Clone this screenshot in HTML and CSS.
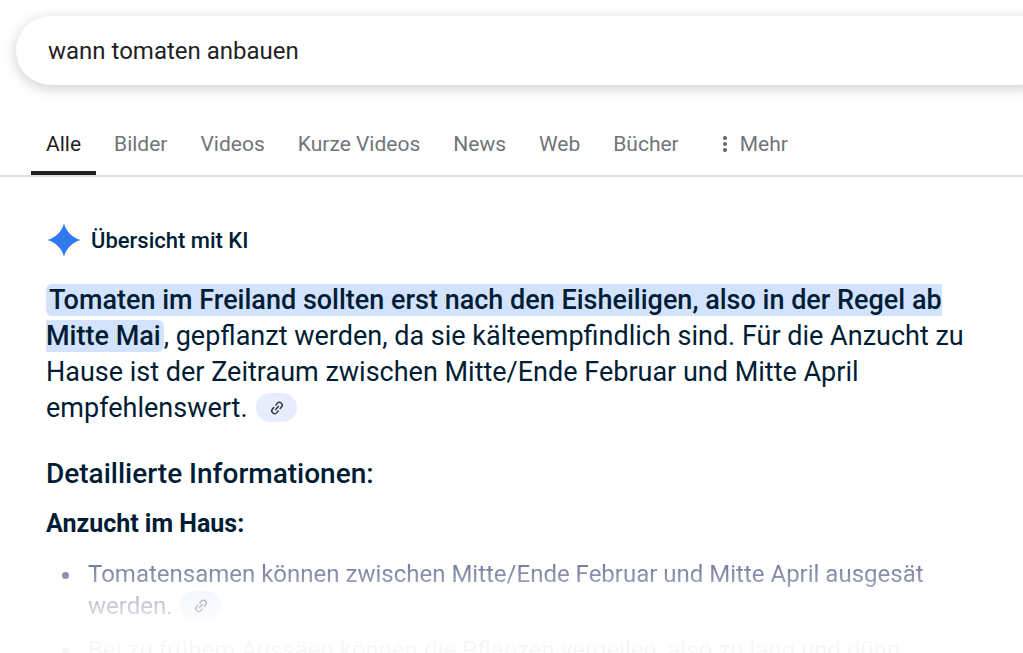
FILE: index.html
```html
<!DOCTYPE html>
<html lang="de">
  <head>
    <meta charset="UTF-8" />
    <meta name="viewport" content="width=device-width, initial-scale=1.0" />

    <title>wann tomaten anbauen</title>

    <link rel="stylesheet" href="styles.css" />
  </head>
  <body>
    <form class="search">
      <input
        class="search-input"
        type="text"
        name="q"
        value="wann tomaten anbauen"
        aria-label="Suche"
      />
    </form>

    <nav class="tabs">
      <a class="tab active" href="#">Alle</a>
      <a class="tab" href="#">Bilder</a>
      <a class="tab" href="#">Videos</a>
      <a class="tab" href="#">Kurze Videos</a>
      <a class="tab" href="#">News</a>
      <a class="tab" href="#">Web</a>
      <a class="tab" href="#">Bücher</a>
      <button class="tab more" type="button">
        <svg class="dots" viewBox="0 0 6 18">
          <circle cx="3" cy="3" r="2" />
          <circle cx="3" cy="9" r="2" />
          <circle cx="3" cy="15" r="2" />
        </svg>
        Mehr
      </button>
    </nav>

    <main class="overview">
      <div class="overview-title">
        <svg class="spark" viewBox="0 0 34 34">
          <path d="M17 0C18.5 8 26 15.5 34 17C26 18.5 18.5 26 17 34C15.5 26 8 18.5 0 17C8 15.5 15.5 8 17 0Z" />
        </svg>
        <span>Übersicht mit KI</span>
      </div>

      <p class="answer">
        <mark class="highlight">Tomaten im Freiland sollten erst nach den Eisheiligen, also in der Regel ab Mitte Mai</mark>, gepflanzt werden, da sie kälteempfindlich sind. Für die Anzucht zu Hause ist der Zeitraum zwischen Mitte/Ende Februar und Mitte April empfehlenswert.
        <button class="chip" type="button" aria-label="Quellen">
          <svg class="link-icon" viewBox="0 0 16 16">
            <g transform="rotate(-50 8 8)">
              <path d="M7 5.2H4.3a2.8 2.8 0 0 0 0 5.6H7M9 5.2h2.7a2.8 2.8 0 0 1 0 5.6H9M5.3 8h5.4" />
            </g>
          </svg>
        </button>
      </p>

      <h2 class="heading">Detaillierte Informationen:</h2>
      <h3 class="subheading">Anzucht im Haus:</h3>

      <ul class="details">
        <li>
          Tomatensamen können zwischen Mitte/Ende Februar und Mitte April ausgesät werden.
          <button class="chip" type="button" aria-label="Quellen">
            <svg class="link-icon" viewBox="0 0 16 16">
              <g transform="rotate(-50 8 8)">
                <path d="M7 5.2H4.3a2.8 2.8 0 0 0 0 5.6H7M9 5.2h2.7a2.8 2.8 0 0 1 0 5.6H9M5.3 8h5.4" />
              </g>
            </svg>
          </button>
        </li>
        <li>Bei zu frühem Aussäen können die Pflanzen vergeilen, also zu lang und dünn</li>
      </ul>
    </main>
  </body>
</html>
```

FILE: styles.css
```css
* {
  box-sizing: border-box;
}
body {
  margin: 0;
  height: 100vh;
  overflow: hidden;
  background-color: #fff;
  color: #001d35;
  font-family: Roboto, "Liberation Sans", sans-serif;
}
button {
  border: 0;
  background: none;
  font-family: inherit;
  cursor: pointer;
}

/* Search */
.search {
  display: flex;
  height: 69px;
  margin: 16px -32px 0 16px;
  padding: 0 32px;
  border-radius: 35px;
  box-shadow: 0 3px 14px rgba(0, 0, 0, 0.2);
}
.search-input {
  flex: 1;
  padding: 0;
  border: 0;
  outline: 0;
  background: none;
  color: #1f1f1f;
  font-family: inherit;
  font-size: 24px;
}

/* Tabs */
.tabs {
  display: flex;
  gap: 3px;
  margin-top: 28px;
  padding-left: 31px;
  border-bottom: 2px solid #dfe0e2;
}
.tab {
  height: 62px;
  padding: 0 15px;
  border-bottom: 4px solid transparent;
  color: #70757a;
  font-size: 21px;
  line-height: 62px;
  text-decoration: none;
  white-space: nowrap;
}
.active {
  border-color: #1f1f1f;
  color: #1f1f1f;
}
.more {
  display: flex;
  align-items: center;
  gap: 12px;
  margin-left: 10px;
  border-bottom: 0;
}
.dots {
  width: 6px;
  height: 18px;
  fill: #5f6368;
}

/* AI overview */
.overview {
  padding: 46px 46px 0;
}
.overview-title {
  display: flex;
  align-items: center;
  gap: 10px;
  padding-left: 1px;
  font-size: 22px;
  font-weight: 500;
}
.spark {
  width: 34px;
  height: 34px;
  fill: #3179ed;
}
.answer {
  margin: 25px 0 0;
  font-size: 27px;
  line-height: 36px;
}
.highlight {
  padding: 0 3px;
  border-radius: 6px;
  background-color: #d3e3fd;
  color: inherit;
  font-weight: 500;
}
.chip {
  display: inline-flex;
  align-items: center;
  justify-content: center;
  width: 41px;
  height: 29px;
  margin: -4px 0 0 2px;
  padding: 0;
  border-radius: 15px;
  background-color: #e5edff;
  vertical-align: middle;
}
.link-icon {
  width: 16px;
  height: 16px;
  fill: none;
  stroke: #37393b;
  stroke-width: 1.5;
}
.heading {
  margin: 30px 0 0;
  font-size: 28px;
  font-weight: 500;
  line-height: 36px;
}
.subheading {
  margin: 16px 0 0;
  font-size: 25px;
  font-weight: 700;
  line-height: 32px;
}
.details {
  margin: 18px 0 0;
  padding-left: 37px;
  color: #4d5680;
  font-size: 24px;
  line-height: 32px;
  mask-image: linear-gradient(rgba(0, 0, 0, 0.85), rgba(0, 0, 0, 0.3) 48px, rgba(0, 0, 0, 0.05) 80px);
}
.details li {
  margin-bottom: 12px;
  padding-left: 5px;
}
```
